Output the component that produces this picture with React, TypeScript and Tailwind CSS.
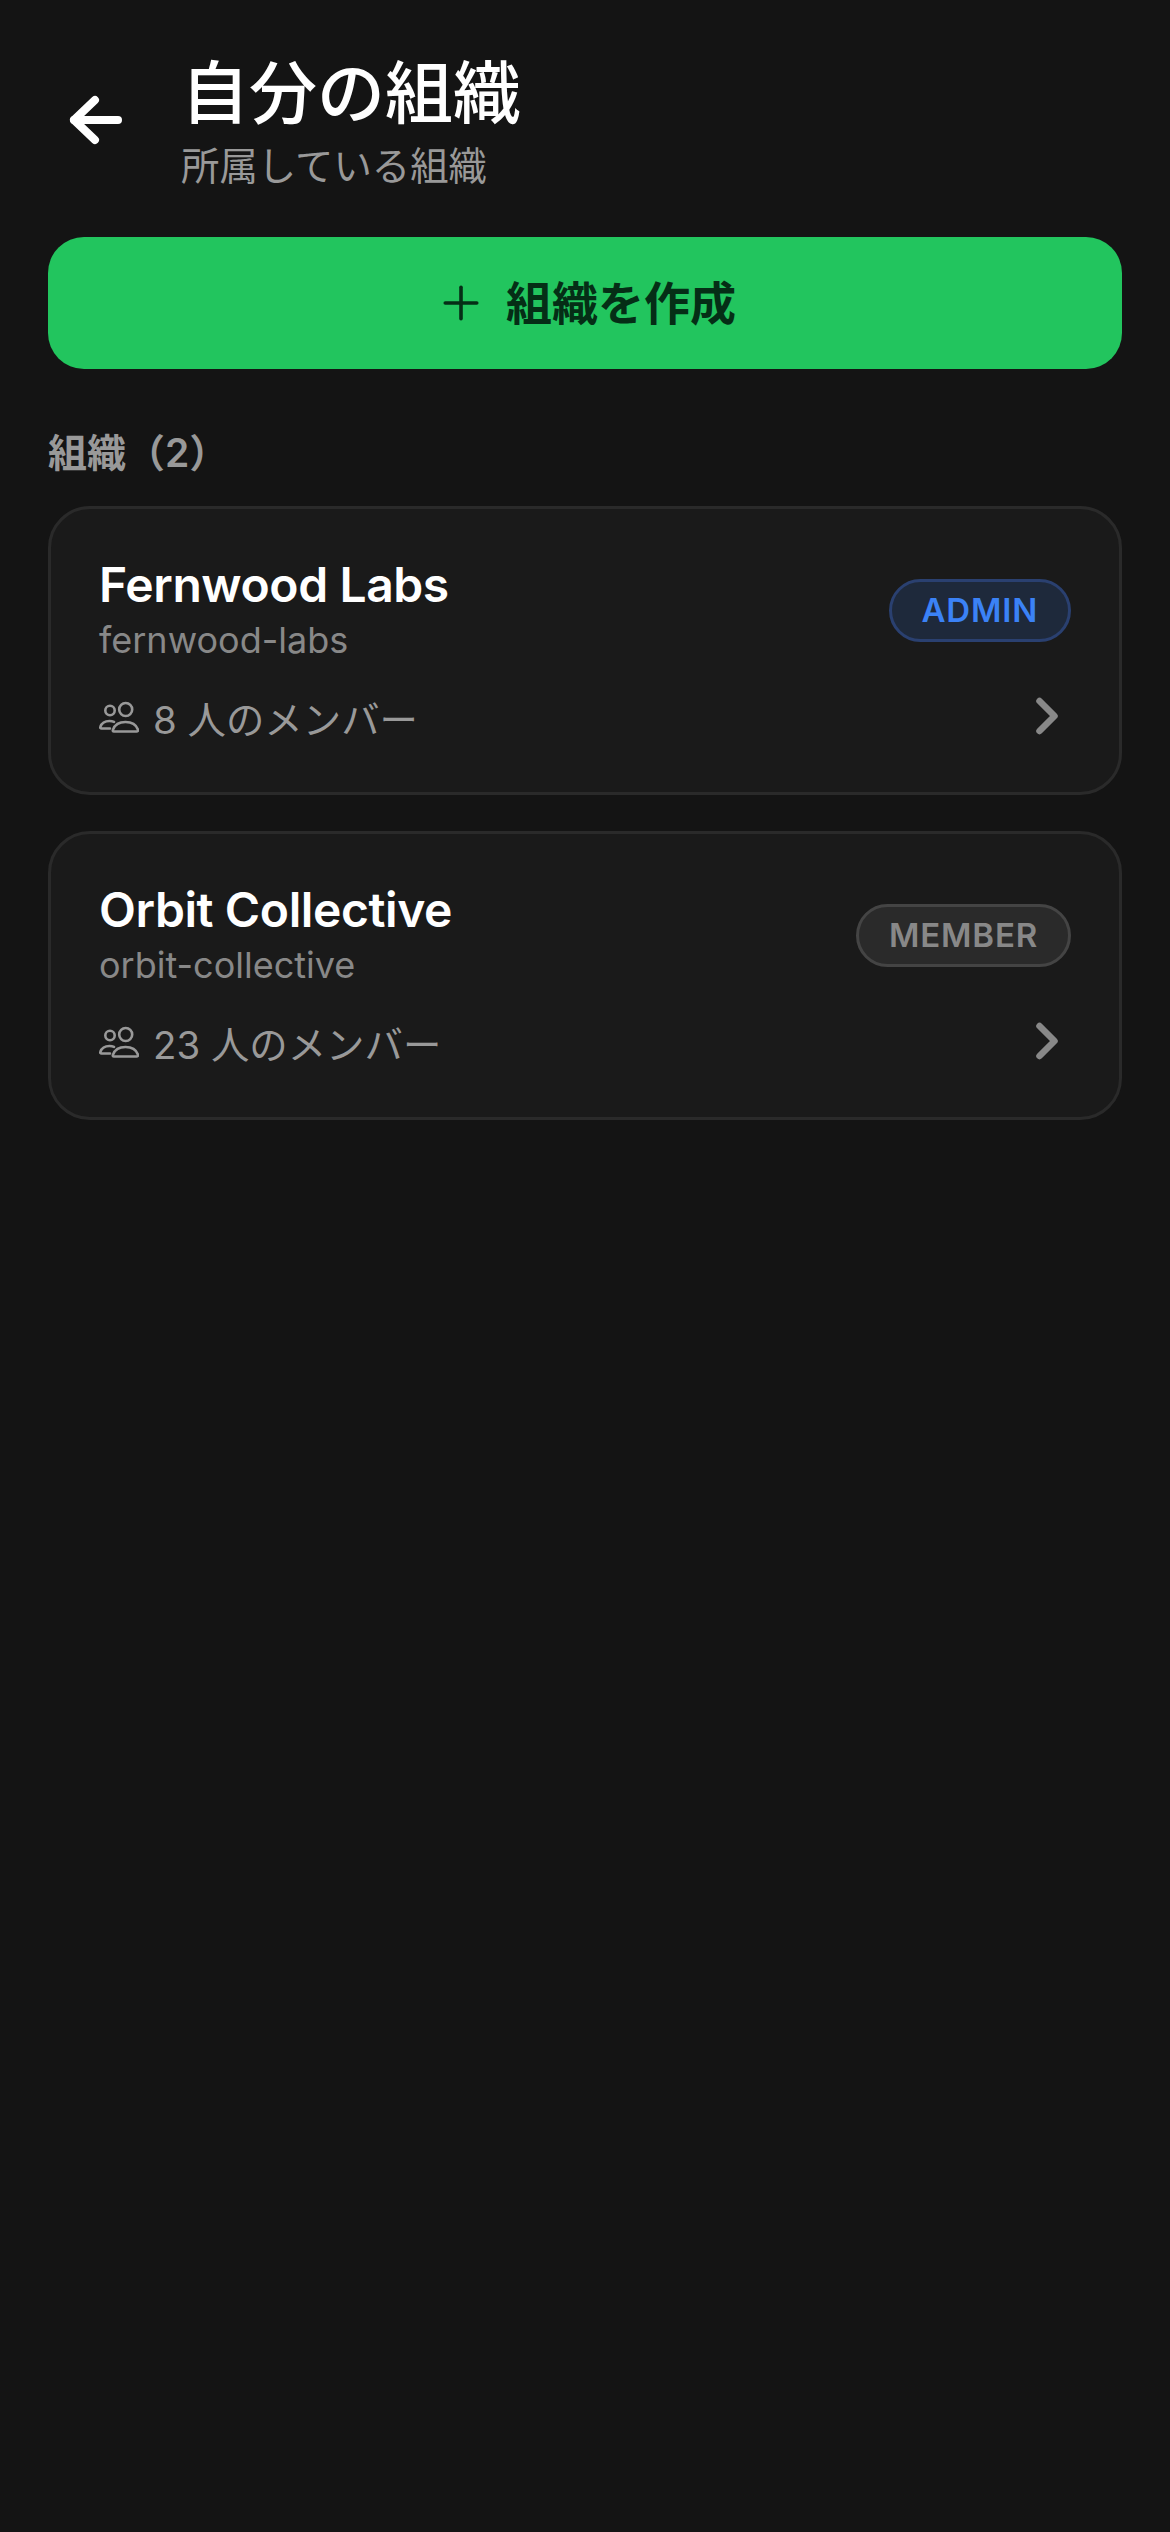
import { ChevronRight, Plus } from "lucide-react";

interface Org {
  name: string;
  slug: string;
  members: number;
  role: "ADMIN" | "MEMBER";
}

const orgs: Org[] = [
  { name: "Fernwood Labs", slug: "fernwood-labs", members: 8, role: "ADMIN" },
  { name: "Orbit Collective", slug: "orbit-collective", members: 23, role: "MEMBER" },
];

function PeopleIcon() {
  return (
    <svg width="40" height="32" viewBox="0 0 40 32" fill="none" stroke="#999999" strokeWidth="2.6" strokeLinecap="round" strokeLinejoin="round" className="shrink-0">
      <circle cx="26.7" cy="8.5" r="6.5" />
      <circle cx="11" cy="9.5" r="4.7" />
      <path d="M15 30.5h22.5c1.2 0 1.8-.8 1.4-1.9C37.4 24.2 32.8 21 26.5 21S15.6 24.2 14 28.6c-.4 1.1-.2 1.9 1 1.9z" />
      <path d="M11 27.5H2.6c-1.1 0-1.6-.7-1.2-1.7C2.6 22.400 6 20 10.500 20c1.700 0 3.200.3 4.500.9" />
    </svg>
  );
}

function OrgCard({ org }: { org: Org }) {
  return (
    <div className="rounded-[42px] border-[3px] border-[#2a2a2a] bg-[#1a1a1a] p-[48px]">
      <div className="flex items-center justify-between">
        <div>
          <p className="text-[48px] leading-[56px] font-semibold tracking-[-0.4px] text-white">{org.name}</p>
          <p className="translate-y-[2px] text-[36px] leading-[50px] text-[#888888]">{org.slug}</p>
        </div>
        {org.role === "ADMIN" ? (
          <span className="rounded-full border-[3px] border-[#2a4070] bg-[#1e293b] px-[30px] text-[33px] leading-[57px] font-semibold tracking-[0.8px] text-[#3b82f6]">
            ADMIN
          </span>
        ) : (
          <span className="rounded-full border-[3px] border-[#444444] bg-[#2a2a2a] px-[30px] text-[33px] leading-[57px] font-semibold tracking-[0.8px] text-[#888888]">
            MEMBER
          </span>
        )}
      </div>
      <div className="mt-[27px] flex h-[54px] items-center justify-between">
        <div className="flex items-center gap-[14px]">
          <PeopleIcon />
          <span className="translate-y-[3px] text-[38.400px] leading-[47px] text-[#999999]">{org.members} 人のメンバー</span>
        </div>
        <ChevronRight size={60} color="#888888" strokeWidth={2.6} className="-mr-[6px] -translate-y-[1px]" />
      </div>
    </div>
  );
}

export default function App() {
  return (
    <div
      className="min-h-[2532px] bg-[#141414] px-[48px]"
      style={{ fontFamily: 'Inter, "Noto Sans CJK JP", sans-serif' }}
    >
      <header className="flex items-center pt-[53px]">
        <svg width="72" height="72" viewBox="0 0 72 72" fill="none" stroke="white" strokeWidth="8" strokeLinecap="round" strokeLinejoin="round" className="ml-[12px] -translate-y-[2px] shrink-0">
          <path d="M58 36H14" />
          <path d="M35 16 L14 36 L35 56" />
        </svg>
        <div className="ml-[49px]">
          <h1 className="text-[68px] leading-[80px] font-medium text-white">自分の組織</h1>
          <p className="mt-[10px] text-[38.400px] leading-[47px] text-[#999999]">所属している組織</p>
        </div>
      </header>

      <button className="mt-[47px] flex h-[132px] w-full items-center justify-center gap-[18px] rounded-[36px] bg-[#22c55e] text-[46px] font-bold text-[#052e16]">
        <Plus size={54} strokeWidth={1.6} color="#052e16" />
        組織を作成
      </button>

      <h2 className="mt-[60px] text-[39px] leading-[47px] font-semibold text-[#999999]">組織（2）</h2>

      <div className="mt-[30px] flex flex-col gap-[36px]">
        {orgs.map((org) => (
          <OrgCard key={org.slug} org={org} />
        ))}
      </div>
    </div>
  );
}
